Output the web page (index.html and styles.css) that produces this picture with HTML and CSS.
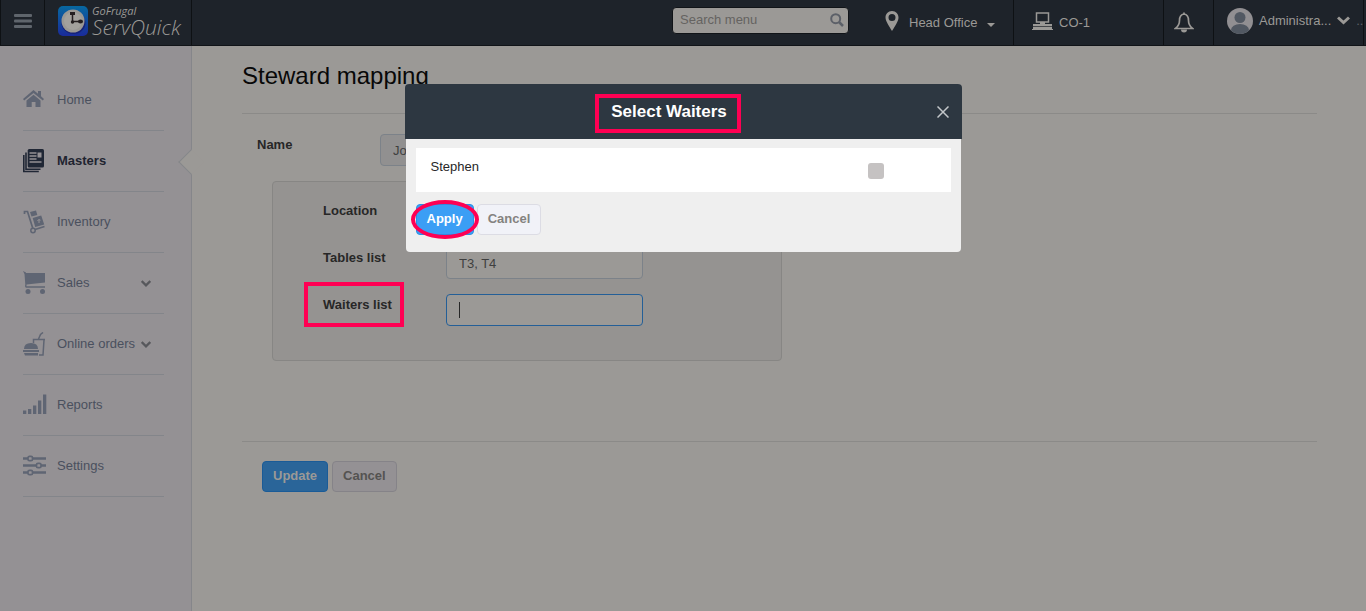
FILE: index.html
```html
<!DOCTYPE html>
<html lang="en">

<head>
    <meta charset="UTF-8">
    <meta name="viewport" content="width=device-width, initial-scale=1.0">
    <title>Steward mapping</title>
    <link rel="stylesheet" href="styles.css">
</head>

<body>
    <header class="topbar">
        <button type="button" class="menu-toggle" aria-label="Toggle menu">
            <svg width="18" height="14" viewBox="0 0 18 14" fill="currentColor">
                <rect width="18" height="3" rx="1" />
                <rect y="5.500" width="18" height="3" rx="1" />
                <rect y="11" width="18" height="3" rx="1" />
            </svg>
        </button>
        <a href="#home" class="brand">
            <svg width="30" height="30" viewBox="0 0 30 30">
                <defs>
                    <linearGradient id="tile" x1="0" y1="0" x2="0" y2="1">
                        <stop offset="0" stop-color="#0768a0" />
                        <stop offset="1" stop-color="#1a2b9a" />
                    </linearGradient>
                </defs>
                <rect width="30" height="30" rx="5" fill="url(#tile)" />
                <ellipse cx="15.500" cy="17" rx="12" ry="11" fill="#172276" />
                <circle cx="15" cy="15" r="11.500" fill="#9a9894" />
                <circle cx="15" cy="15" r="9" fill="#a3a19d" />
                <path d="M12 6h5v3h-5z" fill="#241f20" />
                <path d="M14.500 6v9.500h7" fill="none" stroke="#241f20" stroke-width="1.500" />
                <ellipse cx="22.500" cy="15.500" rx="2.500" ry="2" fill="#241f20" />
                <circle cx="14.500" cy="16" r="1.700" fill="#241f20" />
            </svg>
            <span class="brand-name">
                <span class="brand-small">GoFrugal</span>
                <span class="brand-big">ServQuick</span>
            </span>
        </a>
        <div class="search">
            <input type="text" id="search" placeholder="Search menu" aria-label="Search menu">
            <svg width="14" height="14" viewBox="0 0 14 14" fill="none" stroke="currentColor" stroke-width="2">
                <circle cx="5.700" cy="5.700" r="4.500" />
                <path d="M9 9l4 4" stroke-width="2.500" />
            </svg>
        </div>
        <a href="#location" class="location">
            <svg width="14" height="20" viewBox="0 0 14 20" fill="currentColor">
                <path fill-rule="evenodd" d="M7 0C3 0 .5 3 .5 6.500.5 10 4 15 7 20c3-5 6.500-10 6.500-13.500C13.500 3 11 0 7 0zm0 3a3.500 3.500 0 110 7 3.500 3.500 0 010-7z" />
            </svg>
            <span>Head Office</span>
            <svg class="caret" width="8" height="4" viewBox="0 0 8 4" fill="currentColor"><path d="M0 0h8L4 4z" /></svg>
        </a>
        <a href="#counter" class="counter">
            <svg width="21" height="18" viewBox="0 0 21 18" fill="none" stroke="currentColor">
                <rect x="4.500" y="1" width="12" height="9" stroke-width="1.500" />
                <path d="M8 11h5" stroke-width="2" />
                <path d="M1 12h19v5H1z" fill="currentColor" stroke="none" />
                <path d="M1 14.500h19" stroke="#1e232a" stroke-width=".7" />
                <path d="M0 17.500h21" />
            </svg>
            <span>CO-1</span>
        </a>
        <a href="#alerts" class="alerts" aria-label="Notifications">
            <svg width="20" height="21" viewBox="0 0 20 21" fill="none" stroke="currentColor" stroke-width="1.700">
                <path d="M10 2C6 2.500 5.500 5 5.500 8.500c0 4-1.500 6-4 8h17c-2.500-2-4-4-4-8C14.500 5 14 2.500 10 2zM10 .5v2" />
                <path d="M7 17.500h6a3 3 0 01-6 0z" fill="currentColor" stroke="none" />
            </svg>
        </a>
        <a href="#profile" class="profile">
            <svg width="26" height="26" viewBox="0 0 26 26">
                <defs>
                    <clipPath id="round"><circle cx="13" cy="13" r="13" /></clipPath>
                </defs>
                <g clip-path="url(#round)">
                    <rect width="26" height="26" fill="#918f92" />
                    <circle cx="13" cy="9.500" r="5.500" fill="#515862" />
                    <ellipse cx="13" cy="22" rx="9" ry="6" fill="#515862" />
                </g>
            </svg>
            <span>Administra...</span>
            <svg width="13" height="9" viewBox="0 0 13 9" fill="none" stroke="currentColor" stroke-width="3"><path d="M1 1.500l5.500 5 5.500-5" /></svg>
            <span class="more">..</span>
        </a>
    </header>

    <div class="layout">
        <nav class="sidebar">
            <ul>
                <li><a href="#home">
                    <svg width="24" height="24" viewBox="0 0 24 24" fill="currentColor">
                        <path d="M10.500 2L0 11l1.200 1.500L10.500 5l9.300 7.500L21 11l-3-2.700V3h-3v2.700z" />
                        <path d="M3.500 12.500l7-5.700 7 5.700V19h-5v-5H8.700v5H3.500z" />
                    </svg>
                    <span>Home</span>
                </a></li>
                <li class="active"><a href="#masters">
                    <svg width="24" height="24" viewBox="0 0 24 24" fill="none" stroke="currentColor">
                        <path d="M3 3.500v16.700h14.500M.8 6v16.500h15" stroke-width="1.600" />
                        <rect x="4.700" y="0" width="16.300" height="18.500" rx="1.500" fill="currentColor" stroke="none" />
                        <path d="M6.500 4h7M6.500 7h7M6.500 10h7M6.500 13h12" stroke="#949194" stroke-width="1.300" />
                        <path d="M14.500 3.500h4v5h-4z" fill="#949194" stroke="none" />
                    </svg>
                    <span>Masters</span>
                </a></li>
                <li><a href="#inventory">
                    <svg width="24" height="24" viewBox="0 0 24 24" fill="none" stroke="currentColor">
                        <path d="M1.500 4V1.500h3L10 19M12 19.500l9.500-3" stroke-width="1.700" />
                        <circle cx="10" cy="20.500" r="2.200" stroke-width="1.500" />
                        <path d="M7 2L13 .5l1.300 4.500L8.500 6.500zM9.700 8l8.500-2.500 3 9-9 2.500z" fill="currentColor" stroke="none" />
                        <path d="M16 13v-3.500M14.500 11l1.200-1.500 1.800.7" stroke="#949194" />
                    </svg>
                    <span>Inventory</span>
                </a></li>
                <li><a href="#sales">
                    <svg width="24" height="24" viewBox="0 0 24 24" fill="currentColor">
                        <path d="M0 0l3 1.500V2h19v9.500L3.500 13.500v1.700H22v1.600H3.500Q2 17 2 15l.3-1.500L1.500 3z" />
                        <circle cx="5" cy="20.500" r="2.500" />
                        <circle cx="19.500" cy="20.500" r="2.500" />
                    </svg>
                    <span>Sales</span>
                    <svg class="chevron" width="10" height="7" viewBox="0 0 10 7" fill="none" stroke="currentColor" stroke-width="2.300"><path d="M.7 1L5 5.300 9.300 1" /></svg>
                </a></li>
                <li><a href="#online">
                    <svg width="24" height="24" viewBox="0 0 24 24" fill="currentColor">
                        <path d="M1 17q0-6 7-6t7 6zM0 18h16v2H0zM1 21h14v2.500H2z" />
                        <path d="M10.500 11V7.500h11.500M21 8l-1 15h-4M15.500 7l2-4.500 2.500-2" fill="none" stroke="currentColor" stroke-width="1.500" />
                    </svg>
                    <span>Online orders</span>
                    <svg class="chevron" width="10" height="7" viewBox="0 0 10 7" fill="none" stroke="currentColor" stroke-width="2.300"><path d="M.7 1L5 5.300 9.300 1" /></svg>
                </a></li>
                <li><a href="#reports">
                    <svg width="24" height="24" viewBox="0 0 24 24" fill="currentColor">
                        <path d="M0 17.500h3.300V21H0zM5 16h3.300v5H5zM10 12.500h3.300V21H10zM15 7.500h3.300V21H15zM20 1.500h3.300V21H20z" />
                    </svg>
                    <span>Reports</span>
                </a></li>
                <li><a href="#settings">
                    <svg width="24" height="24" viewBox="0 0 24 24" fill="none" stroke="currentColor" stroke-width="2.500">
                        <path d="M0 4.500h23M0 11.500h23M0 18.500h23" />
                        <g fill="#949194" stroke-width="1.700">
                            <rect x="5" y="2.300" width="4.500" height="4.400" rx="1.500" />
                            <rect x="13.500" y="9.300" width="4.500" height="4.400" rx="1.500" />
                            <rect x="5" y="16.300" width="4.500" height="4.400" rx="1.500" />
                        </g>
                    </svg>
                    <span>Settings</span>
                </a></li>
            </ul>
        </nav>

        <main class="content">
            <h1>Steward mapping</h1>
            <form class="steward-form">
                <div class="field name-field">
                    <label for="name">Name</label>
                    <input type="text" id="name" value="John" readonly>
                </div>
                <div class="panel">
                    <div class="field">
                        <label for="location">Location</label>
                        <input type="text" id="location">
                    </div>
                    <div class="field">
                        <label for="tables">Tables list</label>
                        <input type="text" id="tables" value="T3, T4">
                    </div>
                    <div class="field">
                        <label for="waiters" class="marked">Waiters list</label>
                        <input type="text" id="waiters" class="current">
                    </div>
                </div>
                <div class="actions">
                    <button type="submit" class="btn btn-primary">Update</button>
                    <button type="button" class="btn">Cancel</button>
                </div>
            </form>
        </main>
    </div>

    <!-- waiter selection popup -->
    <div class="modal" role="dialog" aria-labelledby="modalTitle">
        <div class="modal-header">
            <h2 id="modalTitle" class="marked">Select Waiters</h2>
            <button type="button" class="close" aria-label="Close">
                <svg width="12" height="12" viewBox="0 0 12 12" fill="none" stroke="currentColor" stroke-width="1.500"><path d="M.5.500l11 11M11.500.500l-11 11" /></svg>
            </button>
        </div>
        <div class="modal-body">
            <div class="waiter-row">
                <label for="stephen">Stephen</label>
                <input type="checkbox" id="stephen">
            </div>
            <div class="modal-actions">
                <button type="button" class="btn btn-primary circled">Apply</button>
                <button type="button" class="btn">Cancel</button>
            </div>
        </div>
    </div>
</body>

</html>
```

FILE: styles.css
```css
* {
    box-sizing: border-box;
}

body {
    margin: 0;
    min-height: 100vh;
    display: flex;
    flex-direction: column;
    font-family: "Liberation Sans", Arial, sans-serif;
    font-size: 13px;
    line-height: 20px;
    color: #272727;
    background-color: #9b9996;
}

a {
    color: inherit;
    text-decoration: none;
}

button,
input {
    font: inherit;
}

svg {
    display: block;
    flex-shrink: 0;
}

/* Top bar */
.topbar {
    display: flex;
    align-items: stretch;
    height: 46px;
    padding-right: 2px;
    border-bottom: 1px solid #111418;
    background-color: #1e232a;
    color: #9b9996;
}

.topbar > a {
    display: flex;
    align-items: center;
}

.menu-toggle {
    display: flex;
    align-items: center;
    justify-content: center;
    width: 45px;
    padding: 0 0 4px;
    border: 1px solid #0e1114;
    border-width: 0 1px;
    background: none;
    color: #5f656c;
}

.brand {
    width: 147px;
    padding: 0 0 4px 13px;
    gap: 4px;
    border-right: 1px solid #0e1114;
    font-family: "Open Sans", sans-serif;
    font-style: italic;
}

.brand-name {
    display: flex;
    flex-direction: column;
}

.brand-small {
    font-size: 11px;
    line-height: 12px;
}

.brand-big {
    font-size: 21px;
    font-weight: 300;
    line-height: 20px;
}

.search {
    display: flex;
    align-items: center;
    align-self: center;
    width: 177px;
    height: 27px;
    margin: 0 36px 5px auto;
    padding-right: 4px;
    border: 1px solid #111418;
    border-radius: 4px;
    background-color: #9b9996;
    color: #5c6068;
}

.search input {
    flex: 1;
    min-width: 0;
    padding: 0 7px;
    border: 0;
    outline: 0;
    background: none;
}

.search input::placeholder {
    color: #656361;
    opacity: 1;
}

.location {
    width: 128px;
    gap: 10px;
}

.location svg:first-child {
    margin-bottom: 4px;
}

.location .caret {
    margin-top: 4px;
}

.counter,
.alerts,
.profile {
    border-left: 1px solid #0e1114;
}

.counter {
    width: 150px;
    padding-left: 18px;
    gap: 6px;
}

.counter svg {
    margin-bottom: 4px;
}

.alerts {
    width: 50px;
    padding-left: 10px;
}

.profile {
    width: 151px;
    padding: 0 0 4px 13px;
    gap: 6px;
    border-right: 1px solid #0e1114;
}

.profile svg + .more {
    color: #5c6068;
}

/* Sidebar */
.layout {
    display: flex;
    flex: 1;
}

.sidebar {
    width: 192px;
    flex-shrink: 0;
    padding: 24px 27px 24px 23px;
    border-right: 1px solid #85868a;
    background-color: #949194;
    color: #4a505e;
}

.sidebar ul {
    margin: 0;
    padding: 0;
    list-style: none;
}

.sidebar li {
    position: relative;
    border-bottom: 1px solid #83858a;
}

.sidebar a {
    display: flex;
    align-items: center;
    gap: 10px;
    height: 60px;
    padding-right: 13px;
    white-space: nowrap;
}

.sidebar a svg:first-child {
    color: #5f6573;
}

.sidebar .chevron {
    margin-left: -10px;
    color: #57585c;
}

.sidebar a span {
    flex: 1;
}

.sidebar .active {
    color: #1f2430;
    font-weight: bold;
}

.sidebar .active a svg {
    color: #202735;
}

/* Arrow that points at the open section */
.sidebar .active::after {
    content: "";
    position: absolute;
    top: 22px;
    right: -36px;
    width: 17px;
    height: 17px;
    border: 1px solid #85868a;
    border-width: 0 0 1px 1px;
    background-color: #9b9996;
    transform: rotate(45deg);
}

/* Page */
.content {
    flex: 1;
    min-width: 0;
    padding: 0 49px 24px 50px;
}

h1 {
    margin: 0;
    padding: 15px 0 22px;
    border-bottom: 1px solid #8b8a88;
    font-size: 24px;
    font-weight: normal;
    line-height: 30px;
    color: #080808;
}

.steward-form {
    padding-top: 20px;
}

.field {
    display: flex;
    align-items: flex-start;
}

.field label {
    width: 123px;
    flex-shrink: 0;
    padding-top: 1px;
    font-weight: bold;
}

.field input {
    width: 197px;
    height: 32px;
    padding: 0 12px;
    border: 1px solid #7c8289;
    border-radius: 4px;
    outline: 0;
    background-color: #9b9996;
    color: #3f3f3f;
}

.field input[readonly] {
    background-color: #919090;
}

/* Text cursor waits in the empty field */
.field .current {
    border-color: #245f97;
    background-image: linear-gradient(#272727, #272727);
    background-position: 12px center;
    background-size: 1px 16px;
    background-repeat: no-repeat;
}

.name-field {
    padding-left: 15px;
}

.panel {
    display: flex;
    flex-direction: column;
    gap: 15px;
    max-width: 510px;
    margin: 15px 0 80px 30px;
    padding: 18px 50px 34px;
    border: 1px solid #878684;
    border-radius: 4px;
    background-color: #959391;
}

.actions {
    display: flex;
    gap: 4px;
    padding: 19px 20px 0;
    border-top: 1px solid #8b8a88;
}

.btn {
    height: 31px;
    padding: 0 10px 1px;
    border: 1px solid #858388;
    border-radius: 4px;
    background-color: #949194;
    color: #545351;
    font-weight: bold;
}

.btn-primary {
    border-color: #1a5b97;
    background-color: #2a6599;
    color: #9b9996;
}

/* Modal */
.modal {
    position: fixed;
    top: 84px;
    left: 0;
    right: 0;
    width: 555px;
    max-width: 96%;
    margin: 0 auto;
    border-radius: 4px;
    background-color: #efefef;
}

.modal-header {
    display: flex;
    align-items: center;
    justify-content: center;
    height: 55px;
    margin: 0 -1px;
    padding-right: 28px;
    border-radius: 4px 4px 0 0;
    background-color: #2d3741;
}

.modal-header h2 {
    margin: 0;
    font-size: 17px;
    line-height: 20px;
    color: #fff;
}

.close {
    position: absolute;
    top: 18px;
    right: 8px;
    padding: 4px;
    border: 0;
    background: none;
    color: #c3c7ca;
}

.modal-body {
    padding: 9px 10px 17px;
}

.waiter-row {
    display: flex;
    align-items: flex-start;
    justify-content: space-between;
    height: 44px;
    padding: 9px 67px 0 15px;
    background-color: #fff;
}

.waiter-row input {
    appearance: none;
    width: 16px;
    height: 16px;
    margin: 6px 0 0;
    border-radius: 3px;
    background-color: #c5c2c2;
}

.modal-actions {
    display: flex;
    gap: 3px;
    padding-top: 12px;
}

.modal .btn {
    border-color: #dcdce4;
    background-color: #f1f2f8;
    color: #848280;
}

.modal .btn-primary {
    border-color: #2a8ee6;
    background-color: #3b9ef5;
    color: #fff;
}

/* Highlights drawn around the controls of this step */
.marked,
.circled {
    position: relative;
}

.marked::after,
.circled::after {
    content: "";
    position: absolute;
    border: 4px solid #ff0053;
}

.marked::after {
    top: -8px;
    right: -14px;
    bottom: -11px;
    left: -16px;
}

.field .marked::after {
    top: -12px;
    right: 42px;
    bottom: -12px;
    left: -19px;
}

.circled::after {
    top: -5px;
    right: -6px;
    bottom: -5px;
    left: -6px;
    border-radius: 50%;
}
```
